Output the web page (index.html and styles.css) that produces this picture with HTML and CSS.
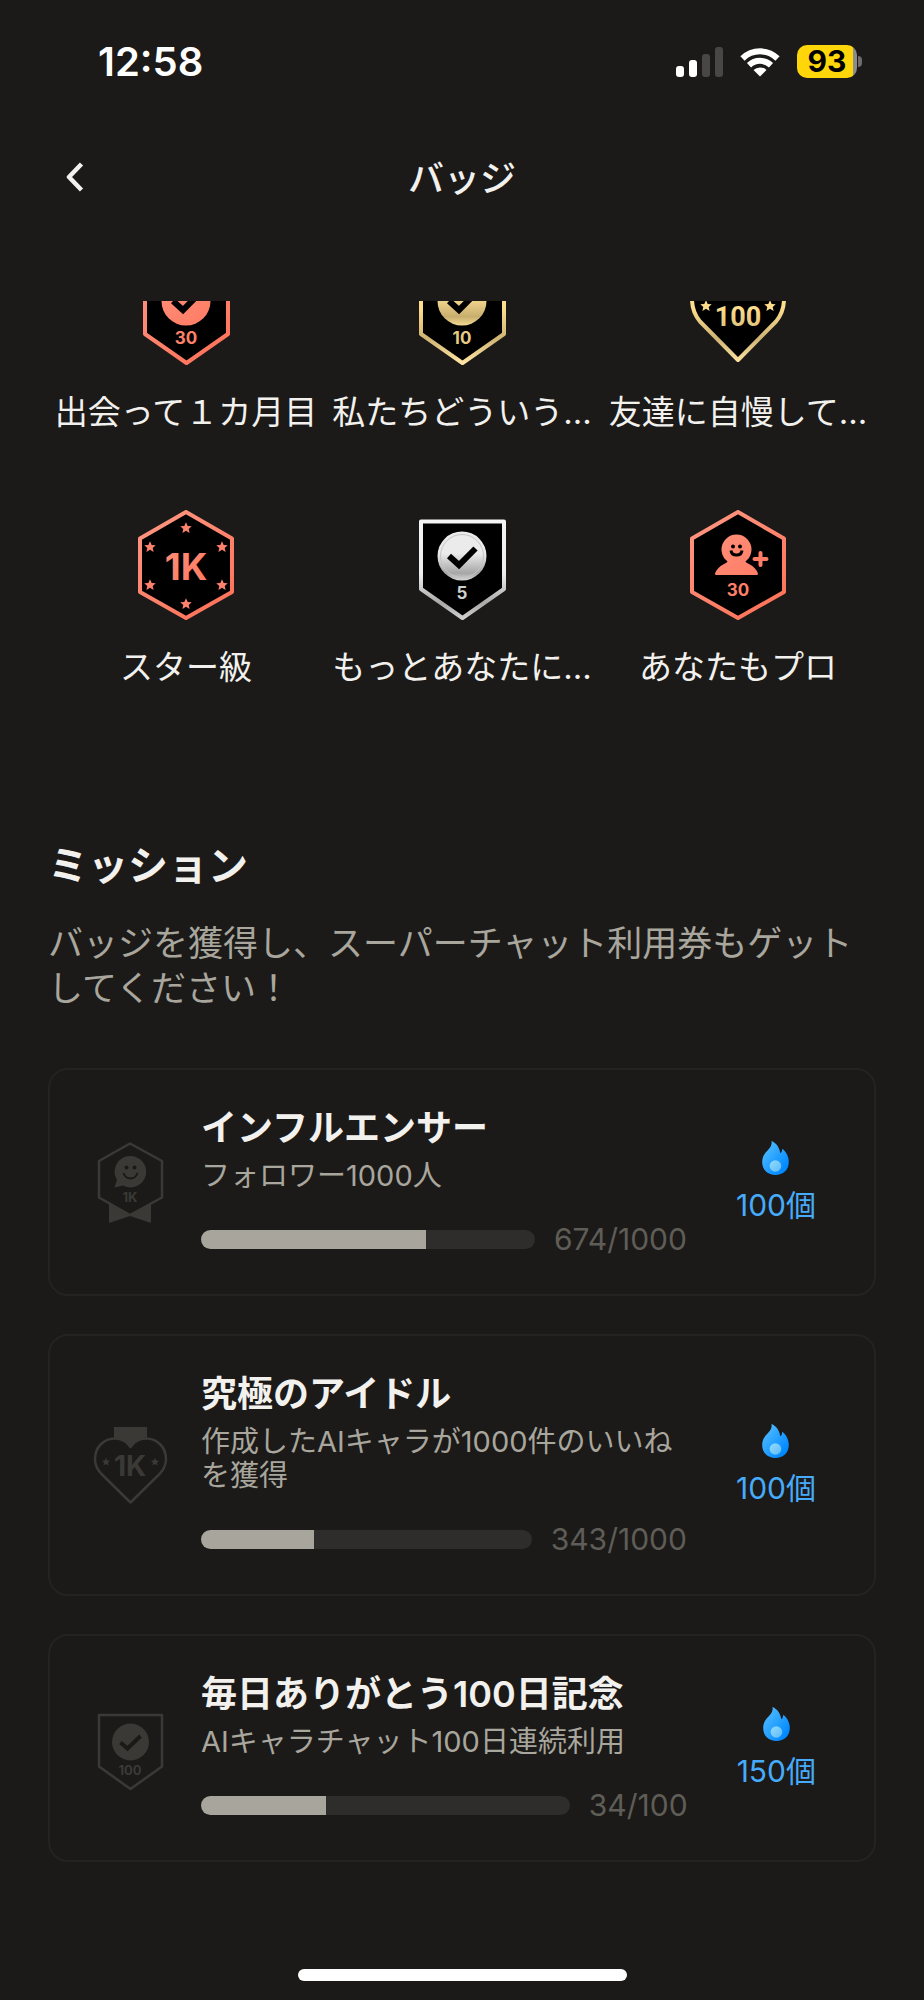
FILE: index.html
```html
<!DOCTYPE html>
<html lang="ja">
<head>
    <meta charset="UTF-8">
    <meta name="viewport" content="width=device-width, initial-scale=1.0">
    <title>バッジ</title>
    <link rel="stylesheet" href="styles.css">
</head>

<body>
    <!-- Shared gradients and shapes -->
    <svg class="defs" width="0" height="0" aria-hidden="true">
        <defs>
            <linearGradient id="coral" gradientUnits="userSpaceOnUse" x1="10" y1="10" x2="80" y2="100">
                <stop offset="0" stop-color="#ff9580"/>
                <stop offset="1" stop-color="#ff735a"/>
            </linearGradient>
            <linearGradient id="gold" gradientUnits="userSpaceOnUse" x1="0" y1="10" x2="0" y2="108">
                <stop offset="0.3" stop-color="#ffe194"/>
                <stop offset="0.45" stop-color="#fbdc8c"/>
                <stop offset="0.75" stop-color="#cfb473"/>
                <stop offset="1" stop-color="#ffe5a3"/>
            </linearGradient>
            <linearGradient id="gold-disc" x1="0" y1="0" x2="0" y2="1">
                <stop offset="0.4" stop-color="#fbdf96"/>
                <stop offset="0.82" stop-color="#c8ae6e"/>
                <stop offset="1" stop-color="#f5da93"/>
            </linearGradient>
            <linearGradient id="silver" gradientUnits="userSpaceOnUse" x1="0" y1="10" x2="0" y2="108">
                <stop offset="0" stop-color="#f4f4f4"/>
                <stop offset="0.55" stop-color="#ededed"/>
                <stop offset="0.85" stop-color="#a9a9a9"/>
                <stop offset="1" stop-color="#cfcfcf"/>
            </linearGradient>
            <linearGradient id="silver-disc" x1="0" y1="0" x2="0" y2="1">
                <stop offset="0.45" stop-color="#ebebeb"/>
                <stop offset="0.85" stop-color="#a6a6a6"/>
                <stop offset="1" stop-color="#d6d6d6"/>
            </linearGradient>
            <linearGradient id="blue" x1="0" y1="0" x2="1" y2="1">
                <stop offset="0.15" stop-color="#4cb9ff"/>
                <stop offset="0.85" stop-color="#0088ff"/>
            </linearGradient>
            <linearGradient id="ember" x1="0" y1="0" x2="1" y2="1">
                <stop offset="0" stop-color="#92dcff"/>
                <stop offset="1" stop-color="#5fbaf5"/>
            </linearGradient>
            <polygon id="star" points="0,-5.8 1.7,-2.1 5.7,-1.8 2.7,0.9 3.6,4.9 0,2.8 -3.6,4.9 -2.7,0.9 -5.7,-1.8 -1.7,-2.1"/>
            <path id="shield" d="M7 11.5H90V79L48.500 108 7 79Z"/>
            <path id="hexagon" d="M48 2 94 28.500V82L48 108 2 82V28.500Z"/>
            <symbol id="flame" viewBox="0 0 27 34">
                <path fill="url(#blue)" d="M9.600 0C14 2 17.500 6 18.300 12.300 19.200 12 20 10.500 20.300 7.800 24.500 11 26.800 16 26.800 21 26.800 29 21 34 13.400 34 6 34 .2 29 .2 21 .2 15.500 3 12 6 9 9 6 10 3.500 9.600 0Z"/>
                <circle cx="13.400" cy="25" r="5.800" fill="url(#ember)"/>
            </symbol>
        </defs>
    </svg>

    <div class="status-bar">
        <span class="time">12:58</span>
        <div class="status-icons">
            <svg width="47" height="30" viewBox="0 0 47 30" fill="#fff">
                <rect x="0" y="19" width="8" height="11" rx="3"/>
                <rect x="13" y="13" width="8" height="17" rx="3"/>
                <rect x="26" y="7" width="8" height="23" rx="3" fill="#484745"/>
                <rect x="39" y="0" width="8" height="30" rx="3" fill="#484745"/>
            </svg>
            <svg width="40" height="30" viewBox="0 0 40 30" fill="none" stroke="#fff" stroke-width="6">
                <path d="M2.500 11.500A25 25 0 0 1 37.500 11.500"/>
                <path d="M9 18.200A16 16 0 0 1 31 18.200"/>
                <path fill="#fff" stroke="none" d="M20 29.500 13.500 23A9.500 9.500 0 0 1 26.500 23Z"/>
            </svg>
            <div class="battery"><span class="battery-body">93</span><span class="battery-tip"></span></div>
        </div>
    </div>

    <header class="header">
        <button class="back" type="button" aria-label="戻る">
            <svg width="18" height="30" viewBox="0 0 18 30" fill="none" stroke="#f2f1ee" stroke-width="4.500" stroke-linejoin="round"><path d="M15.500 2 3 15 15.500 28"/></svg>
        </button>
        <h1>バッジ</h1>
    </header>

    <main>
        <div class="badge-scroll">
            <ul class="badges">
                <li>
                    <svg class="badge" viewBox="0 0 96 110">
                        <use href="#shield" stroke="url(#coral)"/>
                        <circle cx="48" cy="46" r="24.500" fill="url(#coral)"/>
                        <path class="check" d="M35 46 45 55 61.500 38.500"/>
                        <text class="num" x="48" y="89" fill="#ff8069">30</text>
                    </svg>
                    <span>出会って１カ月目</span>
                </li>
                <li>
                    <svg class="badge" viewBox="0 0 96 110">
                        <use href="#shield" stroke="url(#gold)"/>
                        <circle cx="48" cy="46" r="24.500" fill="url(#gold-disc)"/>
                        <path class="check" d="M35 46 45 55 61.500 38.500"/>
                        <text class="num" x="48" y="89" fill="#e6ca83">10</text>
                    </svg>
                    <span>私たちどういう…</span>
                </li>
                <li>
                    <svg class="badge" viewBox="0 0 96 110">
                        <path stroke="url(#gold)" d="M48 105 10 66.500Q2 57 2 44C2 28 14 17 28 17Q40 17 48 27 56 17 68 17C82 17 94 28 94 44Q94 57 86 66.500Z"/>
                        <text class="num-tall" x="48" y="71" fill="url(#gold)">100</text>
                        <use href="#star" x="16" y="51" fill="#fbdc8c"/>
                        <use href="#star" x="80" y="51" fill="#fbdc8c"/>
                    </svg>
                    <span>友達に自慢して…</span>
                </li>
                <li>
                    <svg class="badge" viewBox="0 0 96 110">
                        <use href="#hexagon" stroke="url(#coral)"/>
                        <g fill="#ff826c">
                            <use href="#star" x="48" y="18"/>
                            <use href="#star" x="12" y="37"/>
                            <use href="#star" x="84" y="37"/>
                            <use href="#star" x="12" y="75"/>
                            <use href="#star" x="84" y="75"/>
                            <use href="#star" x="48" y="94"/>
                        </g>
                        <text class="num-big" x="48" y="70" fill="url(#coral)">1K</text>
                    </svg>
                    <span>スター級</span>
                </li>
                <li>
                    <svg class="badge" viewBox="0 0 96 110">
                        <use href="#shield" stroke="url(#silver)"/>
                        <circle cx="48" cy="46" r="24.500" fill="url(#silver-disc)"/>
                        <circle cx="48" cy="46" r="21.500" fill="none" stroke="#c4c4c4" stroke-width="1"/>
                        <path class="check" d="M35 46 45 55 61.500 38.500"/>
                        <text class="num" x="48" y="89" fill="#d0d0d0">5</text>
                    </svg>
                    <span>もっとあなたに…</span>
                </li>
                <li>
                    <svg class="badge" viewBox="0 0 96 110">
                        <use href="#hexagon" stroke="url(#coral)"/>
                        <circle cx="46.500" cy="39.500" r="15" fill="url(#coral)"/>
                        <path fill="url(#coral)" d="M38 50H55C55 52 57 53 59 54 64 56.500 67 60 68 63.500Q68 65 66.500 65H26.500Q25 65 25 63.500C26 60 29 56.500 34 54 36 53 38 52 38 50Z"/>
                        <circle cx="43" cy="36.500" r="2"/>
                        <circle cx="50" cy="36.500" r="2"/>
                        <path d="M41 40.500Q41.500 45 46.500 45T52 40.500" fill="none" stroke="#000" stroke-width="3"/>
                        <path d="M70.500 43V55M64.500 49H76.500" stroke="#ff7d66" stroke-width="4" stroke-linecap="round"/>
                        <text class="num" x="48" y="86" fill="#ff8069">30</text>
                    </svg>
                    <span>あなたもプロ</span>
                </li>
            </ul>
        </div>

        <section class="missions">
            <h2>ミッション</h2>
            <p class="lead">バッジを獲得し、スーパーチャット利用券もゲットしてください！</p>

            <article class="card">
                <svg class="card-icon" viewBox="0 0 80 80">
                    <path stroke="none" d="M19 61 40 73.500 61 61V79.500Q61 81 59.500 80.500L40 74 20.500 80.500Q19 81 19 79.500Z"/>
                    <path class="line" d="M40 1.500 72 19V55.500L40 73 9 55.500V19Z"/>
                    <path d="M40 14A15.700 15.700 0 1 1 33 43.500L24.500 45.500 27 38A15.700 15.700 0 0 1 40 14Z"/>
                    <circle class="hole" cx="36.500" cy="25.500" r="2"/>
                    <circle class="hole" cx="44.500" cy="25.500" r="2"/>
                    <path class="cut" d="M33.500 31Q35.500 36.500 40.500 36.500T47.500 31"/>
                    <text x="40" y="60" font-size="13">1K</text>
                </svg>
                <div class="card-body">
                    <h3>インフルエンサー</h3>
                    <p>フォロワー1000人</p>
                    <div class="progress">
                        <div class="bar"><div class="fill" style="width: 67.4%"></div></div>
                        <span>674/1000</span>
                    </div>
                </div>
                <div class="reward">
                    <svg width="27" height="34"><use href="#flame"/></svg>
                    <span>100個</span>
                </div>
            </article>

            <article class="card">
                <svg class="card-icon" viewBox="0 0 80 80">
                    <path d="M24 2H57V13.500C50 12.500 44 16 40.500 22 37 16 31 12.500 24 13.500Z"/>
                    <path class="line" d="M40.500 77.500 11 48.500Q5 42 5 34C5 22 14 13.500 25 13.500Q35 13.500 40.500 22 46 13.500 56 13.500C67 13.500 76 22 76 34Q76 42 70 48.500Z"/>
                    <use href="#star" transform="translate(16 37) scale(.72)"/>
                    <use href="#star" transform="translate(65 37) scale(.72)"/>
                    <text x="40" y="51" font-size="28">1K</text>
                </svg>
                <div class="card-body">
                    <h3>究極のアイドル</h3>
                    <p>作成したAIキャラが1000件のいいねを獲得</p>
                    <div class="progress">
                        <div class="bar"><div class="fill" style="width: 34.3%"></div></div>
                        <span>343/1000</span>
                    </div>
                </div>
                <div class="reward">
                    <svg width="27" height="34"><use href="#flame"/></svg>
                    <span>100個</span>
                </div>
            </article>

            <article class="card">
                <svg class="card-icon" viewBox="0 0 80 80">
                    <path class="line" d="M9 7H72V58.500L40.500 81 9 58.500Z"/>
                    <circle cx="40.500" cy="34" r="18.500"/>
                    <path class="cut check-small" d="M30.500 34.500 37.500 40.500 50.500 28"/>
                    <text x="40" y="67" font-size="13">100</text>
                </svg>
                <div class="card-body">
                    <h3>毎日ありがとう100日記念</h3>
                    <p>AIキャラチャット100日連続利用</p>
                    <div class="progress">
                        <div class="bar"><div class="fill" style="width: 34%"></div></div>
                        <span>34/100</span>
                    </div>
                </div>
                <div class="reward">
                    <svg width="27" height="34"><use href="#flame"/></svg>
                    <span>150個</span>
                </div>
            </article>
        </section>
    </main>

    <div class="home-indicator"></div>
</body>
</html>
```
FILE: styles.css
```css
* {
    box-sizing: border-box;
}

body {
    display: flex;
    flex-direction: column;
    min-height: 100vh;
    margin: 0;
    background-color: #1b1a18;
    color: #f2f1ee;
    font-family: Inter, "Noto Sans CJK JP", sans-serif;
}

h1, h2, h3, p, ul {
    margin: 0;
    padding: 0;
}

svg {
    display: block;
    flex-shrink: 0;
}

.defs {
    position: absolute;
}

/* Status bar */
.status-bar {
    display: flex;
    justify-content: space-between;
    align-items: center;
    height: 123px;
    padding: 0 62px 0 98px;
}

.time {
    color: #fff;
    font-size: 40px;
    font-weight: 600;
}

.status-icons {
    display: flex;
    align-items: center;
    gap: 17px;
}

.battery {
    display: flex;
    align-items: center;
    gap: 1px;
}

.battery-body {
    width: 60px;
    height: 33px;
    border-radius: 10px;
    background: linear-gradient(to right, #ffd60a 94%, #8d8c8a 94%);
    color: #000;
    font-size: 30px;
    font-weight: 700;
    line-height: 33px;
    text-align: center;
}

.battery-tip {
    width: 4px;
    height: 11px;
    border-radius: 0 5px 5px 0;
    background-color: #6e6d6b;
}

/* Header */
.header {
    display: grid;
    grid-template-columns: 1fr auto 1fr;
    align-items: center;
    height: 108px;
    margin-bottom: 70px;
    padding: 0 48px;
}

.header h1 {
    padding-bottom: 3px;
    font-size: 36px;
    font-weight: 500;
}

.back {
    justify-self: start;
    padding: 12px 18px;
    border: none;
    background: none;
    cursor: pointer;
}

main {
    padding: 0 48px;
}

/* Badges */
.badge-scroll {
    overflow: hidden;
}

.badges {
    display: grid;
    grid-template-columns: repeat(3, 1fr);
    row-gap: 76px;
    margin-top: -46px; /* scrolled a little, first row is cut */
    list-style: none;
}

.badges li {
    display: flex;
    flex-direction: column;
    align-items: center;
    gap: 25px;
    font-size: 33px;
    line-height: 44px;
    white-space: nowrap;
}

.badge {
    width: 96px;
    height: 110px;
    stroke-width: 4;
    stroke-linejoin: round;
}

.badge text, .card-icon text {
    font-weight: 700;
    text-anchor: middle;
    stroke: none;
}

.badge .check {
    fill: none;
    stroke: #000;
    stroke-width: 6;
    stroke-linejoin: miter;
}

.badge .num {
    font-size: 17px;
}

.badge .num-big {
    font-size: 37px;
}

.badge .num-tall {
    font-family: Roboto, sans-serif;
    font-size: 27px;
}

/* Missions */
.missions {
    margin-top: 153px;
}

.missions h2 {
    margin-bottom: 31px;
    font-size: 40px;
    font-weight: 600;
    line-height: 48px;
}

.lead {
    margin-bottom: 57px;
    color: #a8a69d;
    font-size: 35px;
    line-height: 45px;
}

.card {
    display: flex;
    align-items: center;
    margin-bottom: 38px;
    padding: 37px 58px 37px 40px;
    border: 2px solid #242321;
    border-radius: 20px;
}

.card-icon {
    width: 80px;
    height: 80px;
    margin-right: 31px;
    overflow: visible;
    fill: #3a3936;
}

.card-icon .line {
    fill: none;
    stroke: #3a3936;
    stroke-width: 2.5;
    stroke-linejoin: round;
}

.card-icon .hole {
    fill: #1b1a18;
}

.card-icon .cut {
    fill: none;
    stroke: #1b1a18;
    stroke-width: 2;
}

.card-icon .check-small {
    stroke-width: 4;
}

.card-body {
    flex: 1;
}

.card h3 {
    margin-bottom: 10px;
    font-size: 36px;
    font-weight: 600;
    line-height: 42px;
}

.card p {
    margin-bottom: 28px;
    color: #a8a69d;
    font-size: 29px;
    line-height: 34px;
}

.progress {
    display: flex;
    align-items: center;
    gap: 19px;
    color: #5f5d57;
    font-size: 30px;
    line-height: 36px;
}

.bar {
    flex: 1;
    height: 19px;
    border-radius: 10px;
    background-color: #2e2d2b;
    overflow: hidden;
}

.fill {
    height: 100%;
    background-color: #a8a59c;
}

.reward {
    display: flex;
    flex-direction: column;
    align-items: center;
    gap: 12px;
    margin-left: 49px;
    color: #46abfa;
    font-size: 30px;
    line-height: 36px;
}

.home-indicator {
    width: 329px;
    height: 12px;
    margin: auto auto 19px;
    border-radius: 6px;
    background-color: #fff;
}
```
